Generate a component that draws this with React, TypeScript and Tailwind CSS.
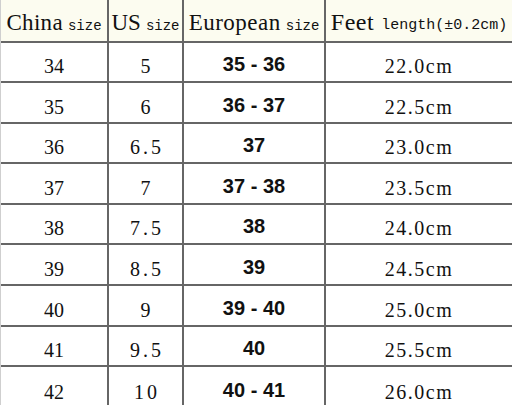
import React from 'react';

const rows = [
  { cn: '34', us: '5', eu: '35 - 36', ft: '22.0cm', h: 'h-[40px]' },
  { cn: '35', us: '6', eu: '36 - 37', ft: '22.5cm', h: 'h-[41px]' },
  { cn: '36', us: '6.5', eu: '37', ft: '23.0cm', h: 'h-[40px]' },
  { cn: '37', us: '7', eu: '37 - 38', ft: '23.5cm', h: 'h-[41px]' },
  { cn: '38', us: '7.5', eu: '38', ft: '24.0cm', h: 'h-[40px]' },
  { cn: '39', us: '8.5', eu: '39', ft: '24.5cm', h: 'h-[41px]' },
  { cn: '40', us: '9', eu: '39 - 40', ft: '25.0cm', h: 'h-[41px]' },
  { cn: '41', us: '9.5', eu: '40', ft: '25.5cm', h: 'h-[40px]' },
  { cn: '42', us: '10', eu: '40 - 41', ft: '26.0cm', h: 'h-[41px]' },
];

const serif = "font-['Liberation_Serif',serif]";
const mono = "font-['Liberation_Mono',monospace]";

const App: React.FC = () => {
  return (
    <div className="w-[512px] h-[405px] overflow-hidden bg-white text-[#111] border-l border-[#cfcfcf]">
      {/* Header */}
      <div className="flex h-[43px] bg-[#fcfcf0] border-b-2 border-[#666]">
        <div className="w-[108px] shrink-0 border-r-2 border-[#666] flex items-end justify-center pb-[7px] whitespace-nowrap">
          <span className={`${serif} text-[23px] leading-none tracking-[0.3px]`}>China</span>
          <span className={`${mono} text-[14px] leading-none ml-[5px] mb-[1px]`}>size</span>
        </div>
        <div className="w-[75px] shrink-0 border-r-2 border-[#666] flex items-end justify-center pb-[7px] whitespace-nowrap">
          <span className={`${serif} text-[23px] leading-none`}>US</span>
          <span className={`${mono} text-[14px] leading-none ml-[5px] mb-[1px]`}>size</span>
        </div>
        <div className="w-[142px] shrink-0 border-r-2 border-[#666] flex items-end justify-center pb-[7px] whitespace-nowrap">
          <span className={`${serif} text-[23px] leading-none tracking-[0.5px]`}>European</span>
          <span className={`${mono} text-[14px] leading-none ml-[5px] mb-[1px]`}>size</span>
        </div>
        <div className="flex-1 flex items-end justify-center pb-[7px] whitespace-nowrap">
          <span className={`${serif} text-[24px] leading-none tracking-[0.5px]`}>Feet</span>
          <span className={`${mono} text-[15px] leading-none ml-[7px] mb-[1px]`}>length(±0.2cm)</span>
        </div>
      </div>

      {rows.map((r) => (
        <div key={r.cn} className={`flex ${r.h} border-b-2 border-[#666] last:border-b-0`}>
          <div className={`w-[108px] shrink-0 border-r-2 border-[#666] flex items-center justify-center pt-[8px] ${serif} text-[20px] leading-none`}>
            {r.cn}
          </div>
          <div className={`w-[75px] shrink-0 border-r-2 border-[#666] flex items-center justify-center pt-[8px] ${serif} text-[20px] leading-none tracking-[3px] pl-[3px]`}>
            {r.us}
          </div>
          <div className="w-[142px] shrink-0 border-r-2 border-[#666] flex items-center justify-center pt-[4px] font-['Liberation_Sans',sans-serif] font-bold text-[20px] leading-none">
            {r.eu}
          </div>
          <div className={`flex-1 flex items-center justify-center pt-[8px] ${serif} text-[20px] leading-none tracking-[1.5px]`}>
            {r.ft}
          </div>
        </div>
      ))}
    </div>
  );
};

export default App;
